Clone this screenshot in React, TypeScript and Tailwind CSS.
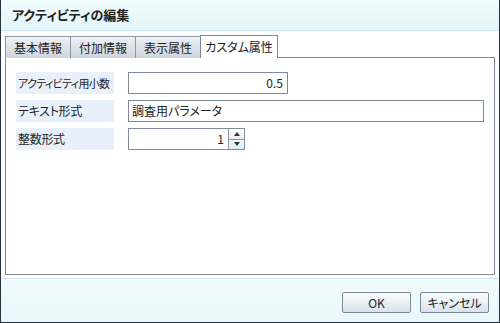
import React from "react";

const font = "font-['Noto_Sans_CJK_JP','Noto_Sans',sans-serif] [font-feature-settings:'palt']";

const Tab: React.FC<{ label: string; active?: boolean; w: string }> = ({ label, active, w }) => (
  <div
    className={
      active
        ? `${w} h-[23px] -ml-px border border-b-0 border-[#7d8894] bg-white flex items-center justify-center text-[12px] text-[#222]`
        : `${w} h-[22px] -ml-px first:ml-0 border border-b-0 border-[#8d97a3] bg-gradient-to-b from-[#eef1f4] to-[#cdd4dc] flex items-center justify-center text-[12px] text-[#222]`
    }
  >
    {label}
  </div>
);

const Label: React.FC<{ text: string; tight?: boolean }> = ({ text, tight }) => (
  <div
    className={`w-[98px] h-[22px] shrink-0 bg-[#e8f1fb] pl-[2px] flex items-center whitespace-nowrap text-[#222] ${
      tight ? "text-[11px] tracking-[-0.7px]" : "text-[12px] tracking-[-0.3px]"
    }`}
  >
    {text}
  </div>
);

const App: React.FC = () => {
  return (
    <div className={`w-[500px] h-[323px] flex flex-col bg-white border-x border-b border-[#25333f] ${font}`}>
      {/* Title */}
      <div className="h-[31px] shrink-0 border-b border-[#cfe3f1] bg-gradient-to-b from-[#f1fcfe] to-[#e4f5fa] pl-[11px] flex items-center">
        <span className="text-[13px] font-bold text-[#222]">アクティビティの編集</span>
      </div>

      {/* Body */}
      <div className="flex-1 flex flex-col px-[4px] pt-[4px] pb-[3px]">
        <div className="flex items-end relative z-10 -mb-px">
          <Tab label="基本情報" w="w-[66px]" />
          <Tab label="付加情報" w="w-[66px]" />
          <Tab label="表示属性" w="w-[66px]" />
          <Tab label="カスタム属性" w="w-[78px]" active />
        </div>
        <div className="flex-1 border border-[#7d8894] pl-[10px] pr-[10px] pt-[14px] flex flex-col gap-[6px]">
          <div className="flex items-center gap-[14px]">
            <Label text="アクティビティ用小数" tight />
            <div className="w-[160px] h-[22px] border border-[#7f8a96] flex items-center justify-end pr-[4px] text-[12px] text-[#222]">
              0.5
            </div>
          </div>
          <div className="flex items-center gap-[14px]">
            <Label text="テキスト形式" />
            <div className="flex-1 h-[22px] border border-[#7f8a96] flex items-center pl-[3px] text-[12px] text-[#222]">
              調査用パラメータ
            </div>
          </div>
          <div className="flex items-center gap-[14px]">
            <Label text="整数形式" />
            <div className="flex h-[22px] border border-[#7f8a96]">
              <div className="w-[99px] flex items-center justify-end pr-[4px] text-[12px] text-[#222]">1</div>
              <div className="w-[16px] border-l border-[#8d97a3] flex flex-col">
                <div className="flex-1 border-b border-[#8d97a3] bg-gradient-to-b from-white to-[#e9eef3] flex items-center justify-center">
                  <svg width="6" height="4" viewBox="0 0 6 4"><path d="M3 0L6 4H0z" fill="#333" /></svg>
                </div>
                <div className="flex-1 bg-gradient-to-b from-[#eef8fb] to-[#dbeef5] flex items-center justify-center">
                  <svg width="6" height="4" viewBox="0 0 6 4"><path d="M0 0H6L3 4z" fill="#333" /></svg>
                </div>
              </div>
            </div>
          </div>
        </div>
      </div>

      {/* Footer */}
      <div className="h-[44px] shrink-0 border-t border-[#d3e5f5] bg-gradient-to-b from-[#f2fbfd] to-[#eaf8fb] flex justify-end items-start pt-[13px] pr-[10px] gap-[9px]">
        <button className="w-[69px] h-[21px] rounded-[2px] border border-[#7d8996] bg-gradient-to-b from-[#fbfcfd] to-[#d9e3ec] text-[12px] text-[#222] flex items-center justify-center">
          OK
        </button>
        <button className="w-[69px] h-[21px] rounded-[2px] border border-[#7d8996] bg-gradient-to-b from-[#fbfcfd] to-[#d9e3ec] text-[12px] text-[#222] flex items-center justify-center">
          キャンセル
        </button>
      </div>
    </div>
  );
};

export default App;
